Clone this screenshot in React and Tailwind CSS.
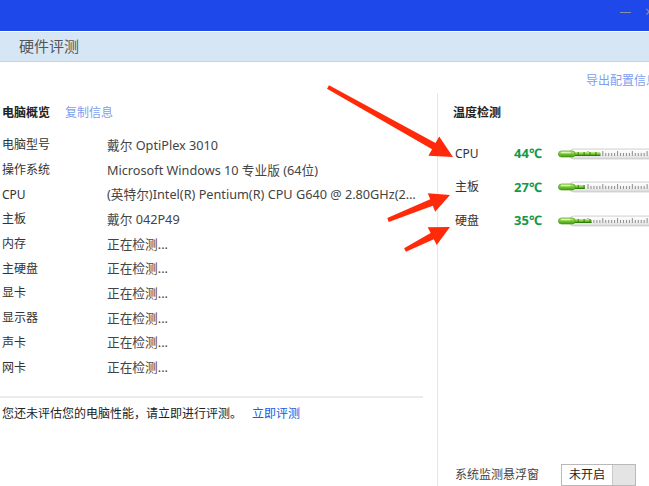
import React from "react";

const info = [
  ["电脑型号", "戴尔 OptiPlex 3010"],
  ["操作系统", "Microsoft Windows 10 专业版 (64位)"],
  ["CPU", "(英特尔)Intel(R) Pentium(R) CPU G640 @ 2.80GHz(2800 MHz)"],
  ["主板", "戴尔 042P49"],
  ["内存", "正在检测..."],
  ["主硬盘", "正在检测..."],
  ["显卡", "正在检测..."],
  ["显示器", "正在检测..."],
  ["声卡", "正在检测..."],
  ["网卡", "正在检测..."],
];

const temps = [
  ["CPU", "44℃", 43],
  ["主板", "27℃", 27],
  ["硬盘", "35℃", 34],
];

function Thermo({ fill }) {
  const ticks = [];
  for (let i = 0; i < 22; i++) {
    const x = 30 + i * 3;
    const long = i % 5 === 0;
    ticks.push(
      <line key={i} x1={x + 0.5} x2={x + 0.5} y1={long ? 4 : 6} y2={9} stroke="#8a8a8a" strokeWidth="1" />
    );
  }
  return (
    <svg width="92" height="14" viewBox="0 0 92 14">
      <defs>
        <linearGradient id="tube" x1="0" y1="0" x2="0" y2="1">
          <stop offset="0" stopColor="#ffffff" />
          <stop offset="0.6" stopColor="#f2f2f2" />
          <stop offset="1" stopColor="#d6d6d6" />
        </linearGradient>
        <linearGradient id="bulb" x1="0" y1="0" x2="0" y2="1">
          <stop offset="0" stopColor="#c8f08a" />
          <stop offset="0.45" stopColor="#7ccc34" />
          <stop offset="1" stopColor="#3f9614" />
        </linearGradient>
      </defs>
      <rect x="11" y="2" width="90" height="10" rx="5" fill="url(#tube)" stroke="#cdcdcd" strokeWidth="1" />
      {ticks}
      <rect x="10" y="5" width={fill - 10} height="4" rx="1" fill="url(#bulb)" />
      {Array.from({ length: Math.floor((fill - 20) / 6) + 1 }).map((_, i) => (
        <line key={i} x1={20 + i * 6 + 0.5} x2={20 + i * 6 + 0.5} y1="5" y2="9" stroke="#2f7a0c" strokeWidth="1" />
      ))}
      <line x1="12" x2={fill} y1="8.5" y2="8.5" stroke="#2f7a0c" strokeWidth="1" />
      <rect x="0.5" y="4" width="17" height="6" rx="3" fill="url(#bulb)" stroke="#4e9e1e" strokeWidth="0.8" />
      <rect x="3" y="4.8" width="10" height="1.4" rx="0.7" fill="#e8ffc8" opacity="0.8" />
    </svg>
  );
}

export default function App() {
  return (
    <div className="relative w-[649px] h-[486px] overflow-hidden bg-white font-['Segoe_UI','Noto_Sans','Noto_Sans_CJK_SC',sans-serif] text-[12px] text-[#333]">
      {/* title bar */}
      <div className="h-[31px] bg-[#1f48eb] flex items-center justify-end gap-[14px] pr-0">
        <div className="w-[11px] h-[1px] bg-[#8a8fa8] mt-[-7px]" />
        <div className="text-[#8a8fa8] text-[14px] leading-none mr-[-4px] mt-[-8px] w-[8px] overflow-hidden">×</div>
      </div>
      <div className="h-[1px] bg-white" />
      <div className="h-[30px] bg-[#d7e6f5] border-b border-[#c4d4e2] flex items-center pl-[19px] text-[15px] text-[#555]">
        硬件评测
      </div>

      {/* top action row */}
      <div className="h-[31px] flex justify-end items-start pt-[10px]">
        <span className="text-[#7d9ef0] leading-[18px] whitespace-nowrap mr-[-9px]">导出配置信息</span>
      </div>

      <div className="flex h-[393px]">
        {/* left column */}
        <div className="w-[437px] flex flex-col pt-[10px] pl-[2px]">
          <div className="h-[20px] flex items-center gap-[15px]">
            <span className="font-bold text-[#222]">电脑概览</span>
            <span className="text-[#7d9ef0]">复制信息</span>
          </div>
          <div className="mt-[10px] flex flex-col">
            {info.map(([k, v]) => (
              <div key={k} className="h-[24.7px] flex items-center">
                <span className="w-[105px] text-[#333]">{k}</span>
                <span className="w-[316px] truncate text-[12.7px] text-[#444]">{v}</span>
              </div>
            ))}
          </div>
          <div className="mt-[16px] ml-[-2px] w-[423px] h-[2px] bg-[#ebebeb]" />
          <div className="mt-[6px] h-[20px] flex items-center">
            <span className="text-[#222]">您还未评估您的电脑性能，请立即进行评测。</span>
            <span className="ml-[10px] text-[#2258e4]">立即评测</span>
          </div>
        </div>

        {/* right column */}
        <div className="w-[212px] border-l border-[#e6e6e6] flex flex-col pt-[10px] pl-[15px]">
          <div className="h-[20px] flex items-center font-bold text-[#222]">温度检测</div>
          <div className="mt-[14px] flex flex-col">
            {temps.map(([k, t, f]) => (
              <div key={k} className="h-[33.5px] flex items-center pl-[2px]">
                <span className="w-[60px] text-[#333]">{k}</span>
                <span className="w-[45px] font-bold text-[13px] text-[#13994a]">{t}</span>
                <Thermo fill={f} />
              </div>
            ))}
          </div>
          <div className="mt-auto mb-[0px] h-[22px] flex items-center pl-[2px]">
            <span className="w-[106px] text-[#444]">系统监测悬浮窗</span>
            <div className="flex h-[22px] border border-[#b9b9b9] bg-[#e4e4e4]">
              <div className="w-[51px] bg-white border-r border-[#c9c9c9] flex items-center justify-center text-[#222]">未开启</div>
              <div className="w-[22px]" />
            </div>
          </div>
        </div>
      </div>

      {/* annotation arrows */}
      <svg className="absolute inset-0 pointer-events-none" width="649" height="486" viewBox="0 0 649 486">
        <polygon
          fill="#ff2a0a"
          points="327,88.7 432.1,149.3 428.4,155.8 453,157 439.2,136.6 435.5,143.1 329,85.3"
        />
        <polygon
          fill="#ff2a0a"
          points="388.7,221.9 432.8,205.7 435.2,211.8 450,195 427.8,193.2 430.2,199.3 387.3,218.1"
        />
        <polygon
          fill="#ff2a0a"
          points="405.9,251.8 433.8,239.2 436.7,245 450,227 427.7,227.2 430.6,233 404.1,248.2"
        />
      </svg>
    </div>
  );
}
